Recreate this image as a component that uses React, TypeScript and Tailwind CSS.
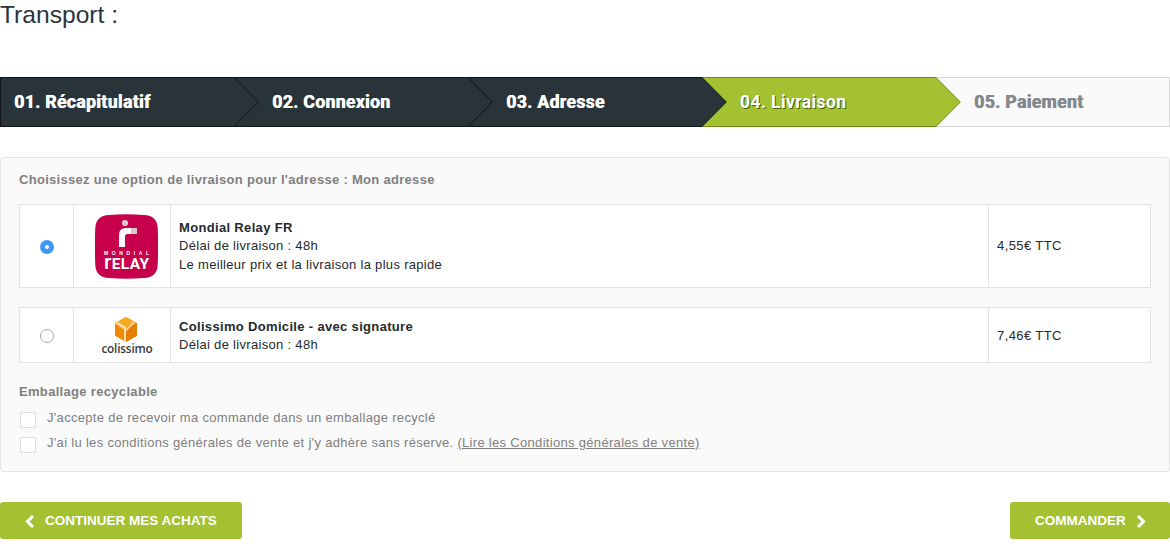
import React from "react";

const steps = [
  { label: "01. Récapitulatif", tone: "done" },
  { label: "02. Connexion", tone: "done" },
  { label: "03. Adresse", tone: "done" },
  { label: "04. Livraison", tone: "active" },
  { label: "05. Paiement", tone: "todo" },
];

function Arrow({ fill, stroke }: { fill: string; stroke: string }) {
  return (
    <svg className="absolute left-full top-[-1px] z-10" width="25" height="50" viewBox="0 0 25 50">
      <path d="M0 0.5 L24.3 25 L0 49.5 Z" fill={fill} />
      <path d="M0 0.5 L24.3 25 L0 49.5" fill="none" stroke={stroke} strokeWidth="1" />
    </svg>
  );
}

function Stepper() {
  return (
    <div className="flex h-[50px] mt-[48px] font-['Roboto',sans-serif]">
      {steps.map((s, i) => {
        const cls =
          s.tone === "done"
            ? "bg-[#29333a] border-[#0f1418] text-white [text-shadow:0.7px_0.4px_0_#fff]"
            : s.tone === "active"
              ? "bg-[#a3c130] border-[#6e8a1f] text-white [text-shadow:1px_1px_0_#4d5f14]"
              : "bg-[#fafafa] border-[#d6d6d6] text-[#84888c] [text-shadow:0.7px_0.4px_0_#84888c]";
        return (
          <div
            key={s.label}
            className={`relative flex items-center border-y text-[17.5px] tracking-[0.4px] font-bold ${cls} ${i === 0 ? "w-[234px] border-l pl-[13px]" : i === 4 ? "w-[234px] border-r pl-[38px]" : "w-[234px] pl-[38px]"}`}
          >
            {s.label}
            {i < 4 && (
              <Arrow
                fill={s.tone === "done" ? "#29333a" : "#a3c130"}
                stroke={s.tone === "done" ? "#0f1418" : "#6e8a1f"}
              />
            )}
          </div>
        );
      })}
    </div>
  );
}

function RelayLogo() {
  return (
    <svg width="63" height="65" viewBox="0 0 63 65" className="ml-[9px]">
      <path d="M14 1 Q31.5 -0.5 49 1 Q62 1.5 62.7 14 Q63.5 32 62.7 51 Q62 63.5 49 64 Q31.5 65.5 14 64 Q1 63.5 0.3 51 Q-0.5 32 0.3 14 Q1 1.5 14 1 Z" fill="#c6004a" />
      <circle cx="30" cy="9" r="3.1" fill="#d9c9c4" />
      <rect x="36" y="14" width="6" height="6" fill="#d9c9c4" />
      <path d="M24 33 V21 Q24 14 31 14 H36 V20 H32 Q30 20 30 22.5 V33 Z" fill="#fff" />
      <text x="9" y="41.3" textLength="45" lengthAdjust="spacing" fill="#fff" fontFamily="'Liberation Sans',sans-serif" fontSize="5" fontWeight="700">MONDIAL</text>
      <text x="9" y="54.7" textLength="45" lengthAdjust="spacing" fill="#fff" fontFamily="'Roboto',sans-serif" fontSize="15.5" fontWeight="700">
        <tspan fontSize="21" fontWeight="500">r</tspan>ELAY
      </text>
    </svg>
  );
}

function ColissimoLogo() {
  return (
    <div className="ml-[10px] flex flex-col items-center">
      <svg width="22" height="25" viewBox="0 0 22 25" className="-ml-[2px]">
        <path d="M11 0 L22 6.2 V18.8 L11 25 L0 18.8 V6.2 Z" fill="#f08a00" />
        <path d="M11 0 L22 6.2 L11 12.4 L0 6.2 Z" fill="#f7a823" />
        <path d="M11 25 L22 18.8 V6.2 L11 12.4 Z" fill="#e87d04" />
        <path d="M0 6.2 L3.5 5.4 L11 10 V25 L9 24 V12.5 Z" fill="#ffe0b0" opacity="0.95" />
        <path d="M11 12.4 L18.5 4.2 L20 5 L11 14.5 Z" fill="#ffe0b0" opacity="0.95" />
      </svg>
      <span className="font-['Open_Sans',sans-serif] text-[11.8px] leading-[12px] font-semibold text-[#3a3a3a] tracking-[-0.2px]">colissimo</span>
    </div>
  );
}

function Row({
  checked,
  logo,
  lines,
  price,
  height,
  textPad,
  pricePad,
}: {
  checked?: boolean;
  logo: React.ReactNode;
  lines: string[];
  price: string;
  height: string;
  textPad: string;
  pricePad: string;
}) {
  return (
    <div className={`flex border border-[#e3e3e3] bg-white ${height}`}>
      <div className="flex w-[54px] items-center justify-center border-r border-[#e3e3e3] pt-[2px]">
        {checked ? (
          <span className="flex size-[14px] items-center justify-center rounded-full bg-[#3f97f5]">
            <span className="size-[4px] rounded-full bg-white" />
          </span>
        ) : (
          <span className="size-[14px] rounded-full border border-[#a8a8a8] bg-white" />
        )}
      </div>
      <div className="flex w-[97px] items-center justify-center border-r border-[#e3e3e3]">{logo}</div>
      <div className={`flex flex-1 flex-col justify-center border-r border-[#e3e3e3] pl-[8px] text-[13px] leading-[18.5px] tracking-[0.31px] text-[#252a2e] ${textPad}`}>
        <div className="font-bold tracking-[0.33px]">{lines[0]}</div>
        {lines.slice(1).map((l) => (
          <div key={l}>{l}</div>
        ))}
      </div>
      <div className={`flex w-[161px] items-center pl-[8px] text-[13px] leading-[20px] tracking-[0.4px] text-[#252a2e] ${pricePad}`}>{price}</div>
    </div>
  );
}

function Check({ children }: { children: React.ReactNode }) {
  return (
    <div className="flex h-[25px] items-center text-[13px] tracking-[0.31px] text-[#7f7f7f]">
      <span className="mr-[11px] ml-[1px] mt-[1px] size-[16px] shrink-0 rounded-[2px] border border-[#dddddd] bg-white" />
      <span className="-mt-[4px]">{children}</span>
    </div>
  );
}

function Chevron({ left }: { left?: boolean }) {
  return (
    <svg width="10" height="13" viewBox="0 0 10 13">
      <path d={left ? "M8 1 L2.5 6.5 L8 12" : "M2 1 L7.5 6.5 L2 12"} fill="none" stroke="#fff" strokeWidth="3" />
    </svg>
  );
}

export default function App() {
  return (
    <div className="h-[549px] w-[1170px] overflow-hidden bg-white font-['Liberation_Sans',sans-serif]">
      <h1 className="h-[29px] text-[24.6px] leading-[29px] font-normal text-[#2b343b]">Transport :</h1>
      <Stepper />
      <div className="mt-[30px] h-[315px] rounded-[3px] border border-[#e5e5e5] bg-[#fafafa] px-[18px] pt-[14px]">
        <div className="h-[32px] text-[13px] leading-[16px] font-bold tracking-[0.3px] text-[#7f7f7f]">
          Choisissez une option de livraison pour l'adresse : Mon adresse
        </div>
        <Row
          checked
          height="h-[84px]"
          textPad="pt-[1px]"
          pricePad=""
          logo={<RelayLogo />}
          lines={["Mondial Relay FR", "Délai de livraison : 48h", "Le meilleur prix et la livraison la plus rapide"]}
          price="4,55€ TTC"
        />
        <div className="h-[19px]" />
        <Row
          height="h-[56px]"
          textPad="pt-[2px]"
          pricePad="pt-[2px]"
          logo={<ColissimoLogo />}
          lines={["Colissimo Domicile - avec signature", "Délai de livraison : 48h"]}
          price="7,46€ TTC"
        />
        <div className="mt-[21px] mb-[7px] text-[13px] leading-[16px] font-bold tracking-[0.32px] text-[#7f7f7f]">Emballage recyclable</div>
        <Check>J'accepte de recevoir ma commande dans un emballage recyclé</Check>
        <Check>
          J'ai lu les conditions générales de vente et j'y adhère sans réserve.{" "}
          <span className="underline">(Lire les Conditions générales de vente)</span>
        </Check>
      </div>
      <div className="mt-[30px] flex justify-between text-[13.5px] font-bold text-white [text-shadow:0.3px_0_0_#fff]">
        <button className="flex h-[37px] w-[242px] items-center gap-[10px] rounded-[3px] bg-[#a3c130] pl-[25px] pt-[1px] uppercase">
          <Chevron left />
          Continuer mes achats
        </button>
        <button className="flex h-[37px] w-[160px] items-center gap-[10px] rounded-[3px] bg-[#a3c130] pl-[25px] pt-[1px] uppercase">
          Commander
          <Chevron />
        </button>
      </div>
    </div>
  );
}
